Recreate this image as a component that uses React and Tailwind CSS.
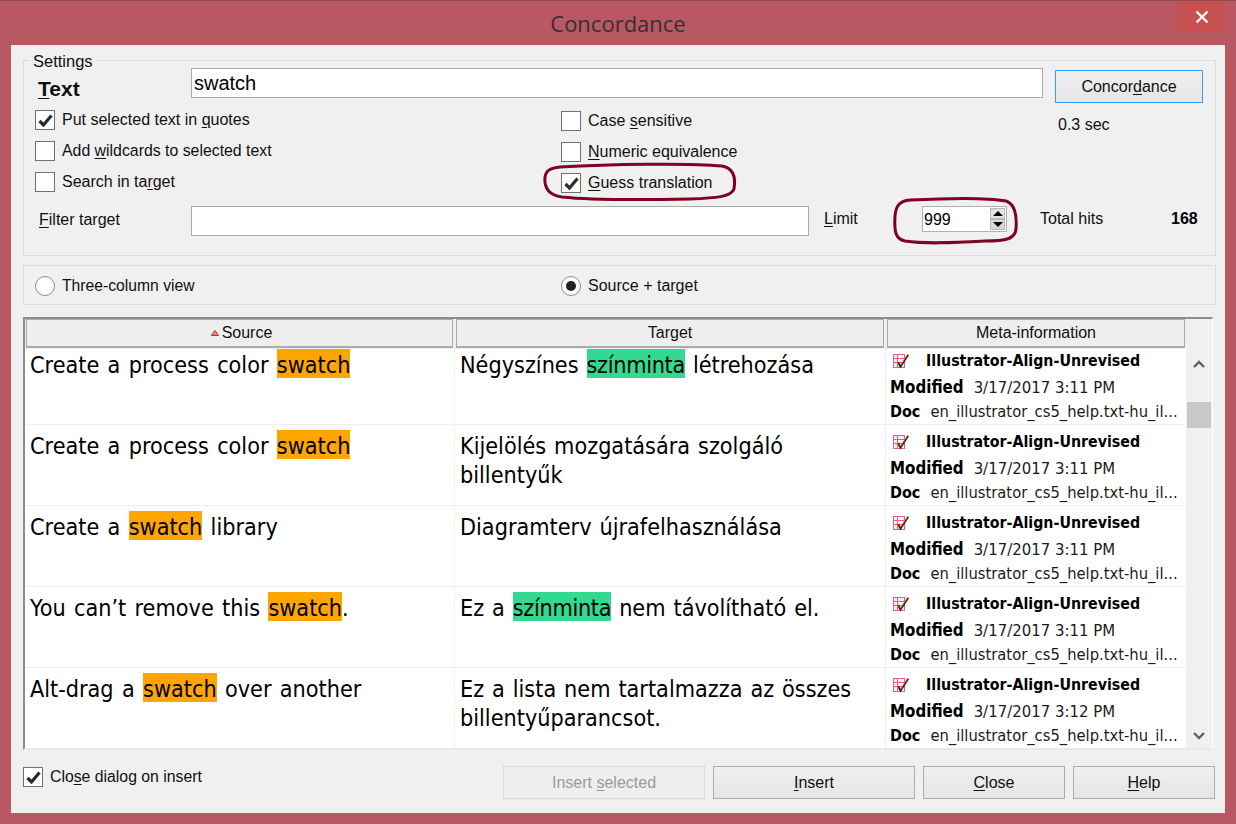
import React from "react";

const ui = { fontFamily: '"Liberation Sans", Arial, sans-serif' };
const tableFont = { fontFamily: '"DejaVu Sans Condensed", "DejaVu Sans", Tahoma, sans-serif', fontStretch: "condensed" };

function U({ children }) {
  return <span className="underline underline-offset-[2px] decoration-1">{children}</span>;
}

function Check({ checked, label, className = "", labelClass = "text-[16px]" }) {
  return (
    <div className={`flex items-center h-[20px] ${className}`}>
      <div className="w-[20px] h-[20px] shrink-0 bg-white border border-[#707070] flex items-center justify-center">
        {checked && (
          <svg width="15" height="13" viewBox="0 0 15 13">
            <path d="M1.5 7 L5.5 11 L13.5 1.5" fill="none" stroke="#2b2b2b" strokeWidth="3.2" />
          </svg>
        )}
      </div>
      <div className={`ml-[7px] leading-[20px] text-[#101010] whitespace-nowrap ${labelClass}`}>{label}</div>
    </div>
  );
}

function Radio({ checked, label, className = "", labelClass = "text-[16px]" }) {
  return (
    <div className={`flex items-center h-[20px] ${className}`}>
      <div className="w-[20px] h-[20px] shrink-0 rounded-full bg-white border border-[#8a8a8a] flex items-center justify-center">
        {checked && <div className="w-[10px] h-[10px] rounded-full bg-[#222]" />}
      </div>
      <div className={`ml-[7px] leading-[22px] text-[#101010] whitespace-nowrap ${labelClass}`}>{label}</div>
    </div>
  );
}

function Btn({ children, disabled, className = "" }) {
  return (
    <div
      className={`h-[33px] flex items-center justify-center text-[16px] border bg-gradient-to-b ${
        disabled ? "border-[#d9d9d9] text-[#9a9a9a] from-[#efefef] to-[#efefef]" : "border-[#acacac] text-[#101010] from-[#f0f0f0] to-[#e5e5e5]"
      } ${className}`}
    >
      <span>{children}</span>
    </div>
  );
}

const O = ({ children }) => <span className="bg-[#ffa500] pt-[2px]">{children}</span>;
const G = ({ children }) => <span className="bg-[#33d990] pt-[2px] tracking-[-0.3px]">{children}</span>;

function RowIcon() {
  return (
    <svg width="18" height="17" viewBox="0 0 18 17" className="shrink-0">
      <rect x="1.5" y="1.5" width="11" height="13" fill="#fbeef4" stroke="#d9619a" strokeWidth="1" />
      <path d="M1.5 5.5H12.5M1.5 9.5H12.5M5.5 1.5V14.5" stroke="#d9619a" strokeWidth="1" fill="none" />
      <path d="M5 9 L8 13.5 L16 1.5" fill="none" stroke="#e8641b" strokeWidth="1.4" />
      <path d="M6.5 9 L8.5 14 L16.5 2" fill="none" stroke="#222" strokeWidth="1.3" />
    </svg>
  );
}

function Meta({ time, first }) {
  return (
    <div className={`w-[300px] shrink-0 pl-[4px] text-[16px] text-black ${first ? "" : "pt-[5px]"}`}>
      <div className="flex items-center h-[24px] pl-[2px]">
        <RowIcon />
        <span className="ml-[16px] font-bold text-[15.8px] whitespace-nowrap">Illustrator-Align-Unrevised</span>
      </div>
      <div className="flex items-center h-[24px] mt-[3px] whitespace-nowrap">
        <span className="font-bold text-[16.8px]">Modified</span>
        <span className="ml-[10px] text-[16.6px] text-[#1a1a1a]">3/17/2017 {time}</span>
      </div>
      <div className="flex items-center h-[24px] whitespace-nowrap">
        <span className="font-bold">Doc</span>
        <span className="ml-[10px] text-[16.4px] text-[#1a1a1a]">en_illustrator_cs5_help.txt-hu_il...</span>
      </div>
    </div>
  );
}

function Row({ source, target, time, first }) {
  const pad = first ? "pt-[1px]" : "pt-[6px]";
  return (
    <div className={`flex border-b border-[#eeeeee] ${first ? "h-[76px]" : "h-[81px]"}`}>
      <div className={`w-[430px] shrink-0 border-r border-[#eeeeee] pl-[5px] ${pad} text-[23.2px] leading-[29px] text-black [word-spacing:1.7px]`}>
        {source}
      </div>
      <div className={`w-[431px] shrink-0 border-r border-[#eeeeee] pl-[5px] pr-[20px] ${pad} text-[23.2px] leading-[29px] text-black [word-spacing:1.3px]`}>
        {target}
      </div>
      <Meta time={time} first={first} />
    </div>
  );
}

function Head({ className, children }) {
  return (
    <div className={`h-[29px] shrink-0 flex items-center justify-center border border-b-2 border-[#ababab] bg-[#eeeeee] text-[16px] text-[#101010] ${className}`}>
      {children}
    </div>
  );
}

export default function App() {
  return (
    <div className="w-[1236px] h-[824px] bg-[#b95763] border-t border-[#8f4a54] flex flex-col relative overflow-hidden" style={ui}>
      <div className="h-[44px] shrink-0 flex justify-center relative">
        <div className="text-[22px] leading-[30px] mt-[7px] text-[#333033]" style={{ fontFamily: '"Open Sans", "Noto Sans", sans-serif' }}>
          Concordance
        </div>
        <div className="absolute right-[10px] top-0 w-[49px] h-[31px] bg-[#c75050] flex items-center justify-center">
          <svg width="14" height="14" viewBox="0 0 14 14">
            <path d="M1.5 1.5L12.5 12.5M12.5 1.5L1.5 12.5" stroke="#fff" strokeWidth="2.2" fill="none" />
          </svg>
        </div>
      </div>

      <div className="mx-[11px] w-[1214px] h-[768px] bg-[#f0f0f0] px-[12px] pt-[15px]">
        {/* Settings */}
        <div className="relative w-[1193px] h-[196px] border border-[#dcdcdc] pt-[7px]">
          <div className="absolute left-[6px] -top-[9px] px-[3px] bg-[#f0f0f0] text-[16.5px] leading-[18px] text-[#101010]">Settings</div>
          <div className="flex h-[41px]">
            <div className="w-[167px] pl-[14px] pt-[9px] text-[21px] leading-[24px] font-bold text-[#101010]">
              <U>T</U>ext
            </div>
            <div className="w-[852px] h-[30px] bg-white border border-[#ababab] pl-[2px] text-[20px] leading-[28px] text-black">swatch</div>
            <div className="ml-[12px] mt-[2px] w-[148px] h-[33px] flex items-center justify-center text-[16px] border border-[#3c9af8] bg-gradient-to-b from-[#f0f0f0] to-[#e5e5e5] text-[#101010]">
              <span>Concor<U>d</U>ance</span>
            </div>
          </div>
          <div className="flex">
            <div className="w-[537px] pl-[11px] pt-[1px]">
              <Check checked label={<>Put selected text in <U>q</U>uotes</>} />
              <Check className="mt-[11px]" labelClass="text-[15.85px]" label={<>Add <U>w</U>ildcards to selected text</>} />
              <Check className="mt-[11px]" label={<>Search in ta<U>r</U>get</>} />
            </div>
            <div className="w-[497px] pt-[2px]">
              <Check label={<>Case <U>s</U>ensitive</>} />
              <Check className="mt-[11px]" label={<><U>N</U>umeric equivalence</>} />
              <Check className="mt-[11px]" checked label={<><U>G</U>uess translation</>} />
            </div>
            <div className="text-[16px] leading-[20px] text-[#101010] pt-[6px]">0.3 sec</div>
          </div>
          <div className="flex mt-[13px] text-[16px] text-[#101010]">
            <div className="w-[167px] pl-[15px] leading-[28px]"><U>F</U>ilter target</div>
            <div className="w-[618px] h-[30px] bg-white border border-[#ababab]" />
            <div className="w-[113px] pl-[15px] leading-[26px]"><U>L</U>imit</div>
            <div className="w-[85px] h-[26px] bg-white border border-[#b0b0b0] flex items-center justify-between pl-[1px] pr-[1px] text-black">
              <span className="pt-[1px]">999</span>
              <div className="w-[15px] h-[22px] flex flex-col justify-between">
                <div className="h-[11px] bg-[#e4e4e4] border border-[#b8b8b8] flex items-center justify-center">
                  <div className="border-x-[5px] border-x-transparent border-b-[5px] border-b-black" />
                </div>
                <div className="h-[11px] bg-[#d8d8d8] border border-[#b8b8b8] flex items-center justify-center">
                  <div className="border-x-[5px] border-x-transparent border-t-[5px] border-t-black" />
                </div>
              </div>
            </div>
            <div className="ml-[33px] w-[131px] leading-[26px]">Total hits</div>
            <div className="font-bold leading-[26px] text-black">168</div>
          </div>
        </div>

        {/* View */}
        <div className="mt-[9px] w-[1193px] h-[40px] border border-[#dcdcdc] flex items-center pl-[11px] pt-[2px]">
          <Radio className="w-[526px]" labelClass="text-[15.7px]" label="Three-column view" />
          <Radio checked label="Source + target" />
        </div>

        {/* Table */}
        <div className="mt-[12px] w-[1190px] h-[433px] border-t-2 border-l-2 border-[#8c8c8c] border-r border-r-[#ffffff] border-b-2 border-b-[#e9e9e9] flex flex-col">
          <div className="flex gap-[3px] pl-[1px] shrink-0 bg-[#f0f0f0] h-[30px]">
            <Head className="w-[427px] pl-[4px]">
              <svg width="8" height="6" viewBox="0 0 8 6" className="mr-[3px]"><path d="M4 .5L7.5 5.5H.5Z" fill="#ef8a8a" stroke="#d8202c" strokeWidth="1" /></svg>
              Source
            </Head>
            <Head className="w-[428px]">Target</Head>
            <Head className="w-[298px]">Meta-information</Head>
          </div>
          <div className="flex flex-1 min-h-0">
            <div className="w-[1161px] shrink-0 bg-white overflow-hidden" style={tableFont}>
              <Row first time="3:11 PM" source={<>Create a process color <O>swatch</O></>} target={<>Négyszínes <G>színminta</G> létrehozása</>} />
              <Row time="3:11 PM" source={<>Create a process color <O>swatch</O></>} target={<>Kijelölés mozgatására szolgáló billentyűk</>} />
              <Row time="3:11 PM" source={<>Create a <O>swatch</O> library</>} target={<>Diagramterv újrafelhasználása</>} />
              <Row time="3:11 PM" source={<>You can’t remove this <O>swatch</O>.</>} target={<>Ez a <G>színminta</G> nem távolítható el.</>} />
              <Row time="3:12 PM" source={<>Alt-drag a <O>swatch</O> over another</>} target={<>Ez a lista nem tartalmazza az összes billentyűparancsot.</>} />
            </div>
            <div className="w-[24px] shrink-0 ml-[1px] bg-[#f0f0f0] flex flex-col items-center justify-between pt-[11px] pb-[8px] relative">
              <svg width="12" height="8" viewBox="0 0 12 8"><path d="M1 7L6 2L11 7" fill="none" stroke="#606060" strokeWidth="2.4" /></svg>
              <div className="absolute left-0 top-[53px] w-[24px] h-[26px] bg-[#c8c8c8]" />
              <svg width="12" height="8" viewBox="0 0 12 8"><path d="M1 1L6 6L11 1" fill="none" stroke="#606060" strokeWidth="2.4" /></svg>
            </div>
          </div>
        </div>

        {/* Bottom */}
        <div className="flex items-start mt-[16px] w-[1193px]">
          <Check checked className="mt-[1px] w-[480px]" labelClass="text-[15.8px]" label={<>Clo<U>s</U>e dialog on insert</>} />
          <Btn disabled className="w-[202px]">Insert <U>s</U>elected</Btn>
          <Btn className="w-[202px] ml-[8px]"><U>I</U>nsert</Btn>
          <Btn className="w-[142px] ml-[8px]"><U>C</U>lose</Btn>
          <Btn className="w-[142px] ml-[8px]"><U>H</U>elp</Btn>
        </div>
      </div>

      {/* Hand-drawn annotation marks */}
      <svg className="absolute left-0 top-0 pointer-events-none" width="1236" height="824" viewBox="0 0 1236 824">
        <path d="M560 166 C610 163 690 162 722 165 C733 167 736 176 734 188 C731 196 716 197 690 198 C640 199 590 199 562 196 C548 194 544 186 545 176 C546 169 551 167 560 166Z" fill="none" stroke="#7f0020" strokeWidth="3" />
        <path d="M910 199 C950 197 990 197 1006 200 C1015 203 1017 214 1016 228 C1015 238 1006 240 985 240 C950 242 925 243 905 240 C896 238 894 232 895 215 C896 204 900 200 910 199Z" fill="none" stroke="#7f0020" strokeWidth="3" />
      </svg>
    </div>
  );
}
